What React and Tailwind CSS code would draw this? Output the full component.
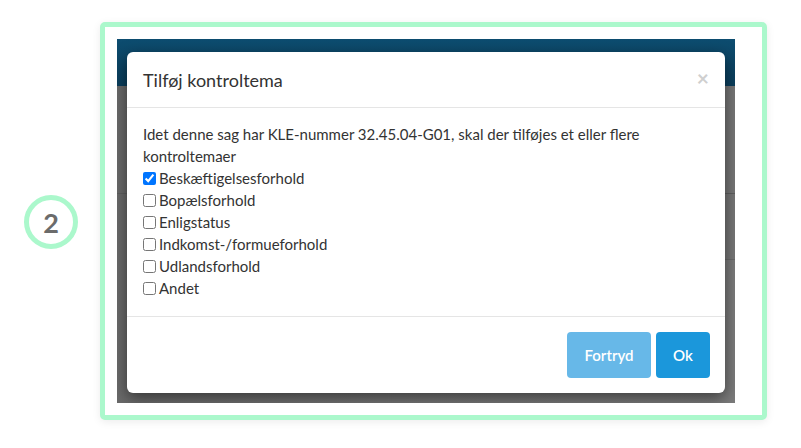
import React from "react";

const items = [
  { label: "Beskæftigelsesforhold", checked: true },
  { label: "Bopælsforhold" },
  { label: "Enligstatus" },
  { label: "Indkomst-/formueforhold" },
  { label: "Udlandsforhold" },
  { label: "Andet" },
];

export default function App() {
  return (
    <div
      className="w-[801px] h-[448px] bg-white flex items-start overflow-hidden"
      style={{ fontFamily: "Lato, 'Open Sans', sans-serif" }}
    >
      <div className="ml-[24px] mt-[195px] w-[54px] h-[54px] rounded-full border-[5px] border-[#abf8cc] flex items-center justify-center">
        <span className="text-[27px] font-bold text-[#6b6b6b] leading-none">2</span>
      </div>

      <div className="ml-[22px] mt-[22px] w-[667px] h-[398px] border-[5px] border-[#abf8cc] rounded-[5px] bg-white shadow-[0_2px_8px_rgba(0,0,0,0.08)] pt-[12px] pl-[12px]">
        <div className="relative w-[618px] h-[364px] overflow-hidden bg-[#777777] flex flex-col">
          <div className="h-[47px] bg-gradient-to-b from-[#0d4d70] to-[#0b3e5c]" />
          <div className="h-[108px] border-b border-[#5f5f5f] bg-gradient-to-r from-[#6a6a6a] via-[#777] to-[#777]" />
          <div className="h-[66px] border-b border-[#6a6a6a] bg-gradient-to-r from-[#6a6a6a] via-[#777] to-[#777]" />
          <div className="flex-1 bg-gradient-to-r from-[#6a6a6a] via-[#777] to-[#7b7b7b]" />

          <div className="absolute left-[10px] top-[13px] w-[598px] h-[341px] bg-white rounded-[6px] shadow-[0_5px_15px_rgba(0,0,0,0.5)] flex flex-col text-[#333]">
            <div className="h-[56px] border-b border-[#e5e5e5] flex items-center justify-between pl-[16px] pr-[16px]">
              <span className="text-[18px] text-[#333] leading-none">Tilføj kontroltema</span>
              <span className="text-[21px] font-bold text-[#cfcfcf] leading-none -mt-[4px]">×</span>
            </div>
            <div className="flex-1 pt-[15px] pr-[15px] pl-[16px] text-[15px] leading-[22px] text-[#333]">
              <p>Idet denne sag har KLE-nummer 32.45.04-G01, skal der tilføjes et eller flere kontroltemaer</p>
              <div className="flex flex-col">
                {items.map((it) => (
                  <label key={it.label} className="flex items-center h-[22px]">
                    <input
                      type="checkbox"
                      defaultChecked={!!it.checked}
                      className="w-[13px] h-[13px] m-0 mr-[3px] accent-[#0075ff]"
                    />
                    <span>{it.label}</span>
                  </label>
                ))}
              </div>
            </div>
            <div className="border-t border-[#e5e5e5] h-[77px] flex items-start justify-end pt-[15px] pr-[15px] gap-[5px]">
              <button className="h-[46px] w-[84px] rounded-[4px] bg-[#67b8e8] text-white text-[15px] font-semibold">Fortryd</button>
              <button className="h-[46px] w-[54px] rounded-[4px] bg-[#1b97db] text-white text-[15px] font-semibold">Ok</button>
            </div>
          </div>
        </div>
      </div>
    </div>
  );
}
